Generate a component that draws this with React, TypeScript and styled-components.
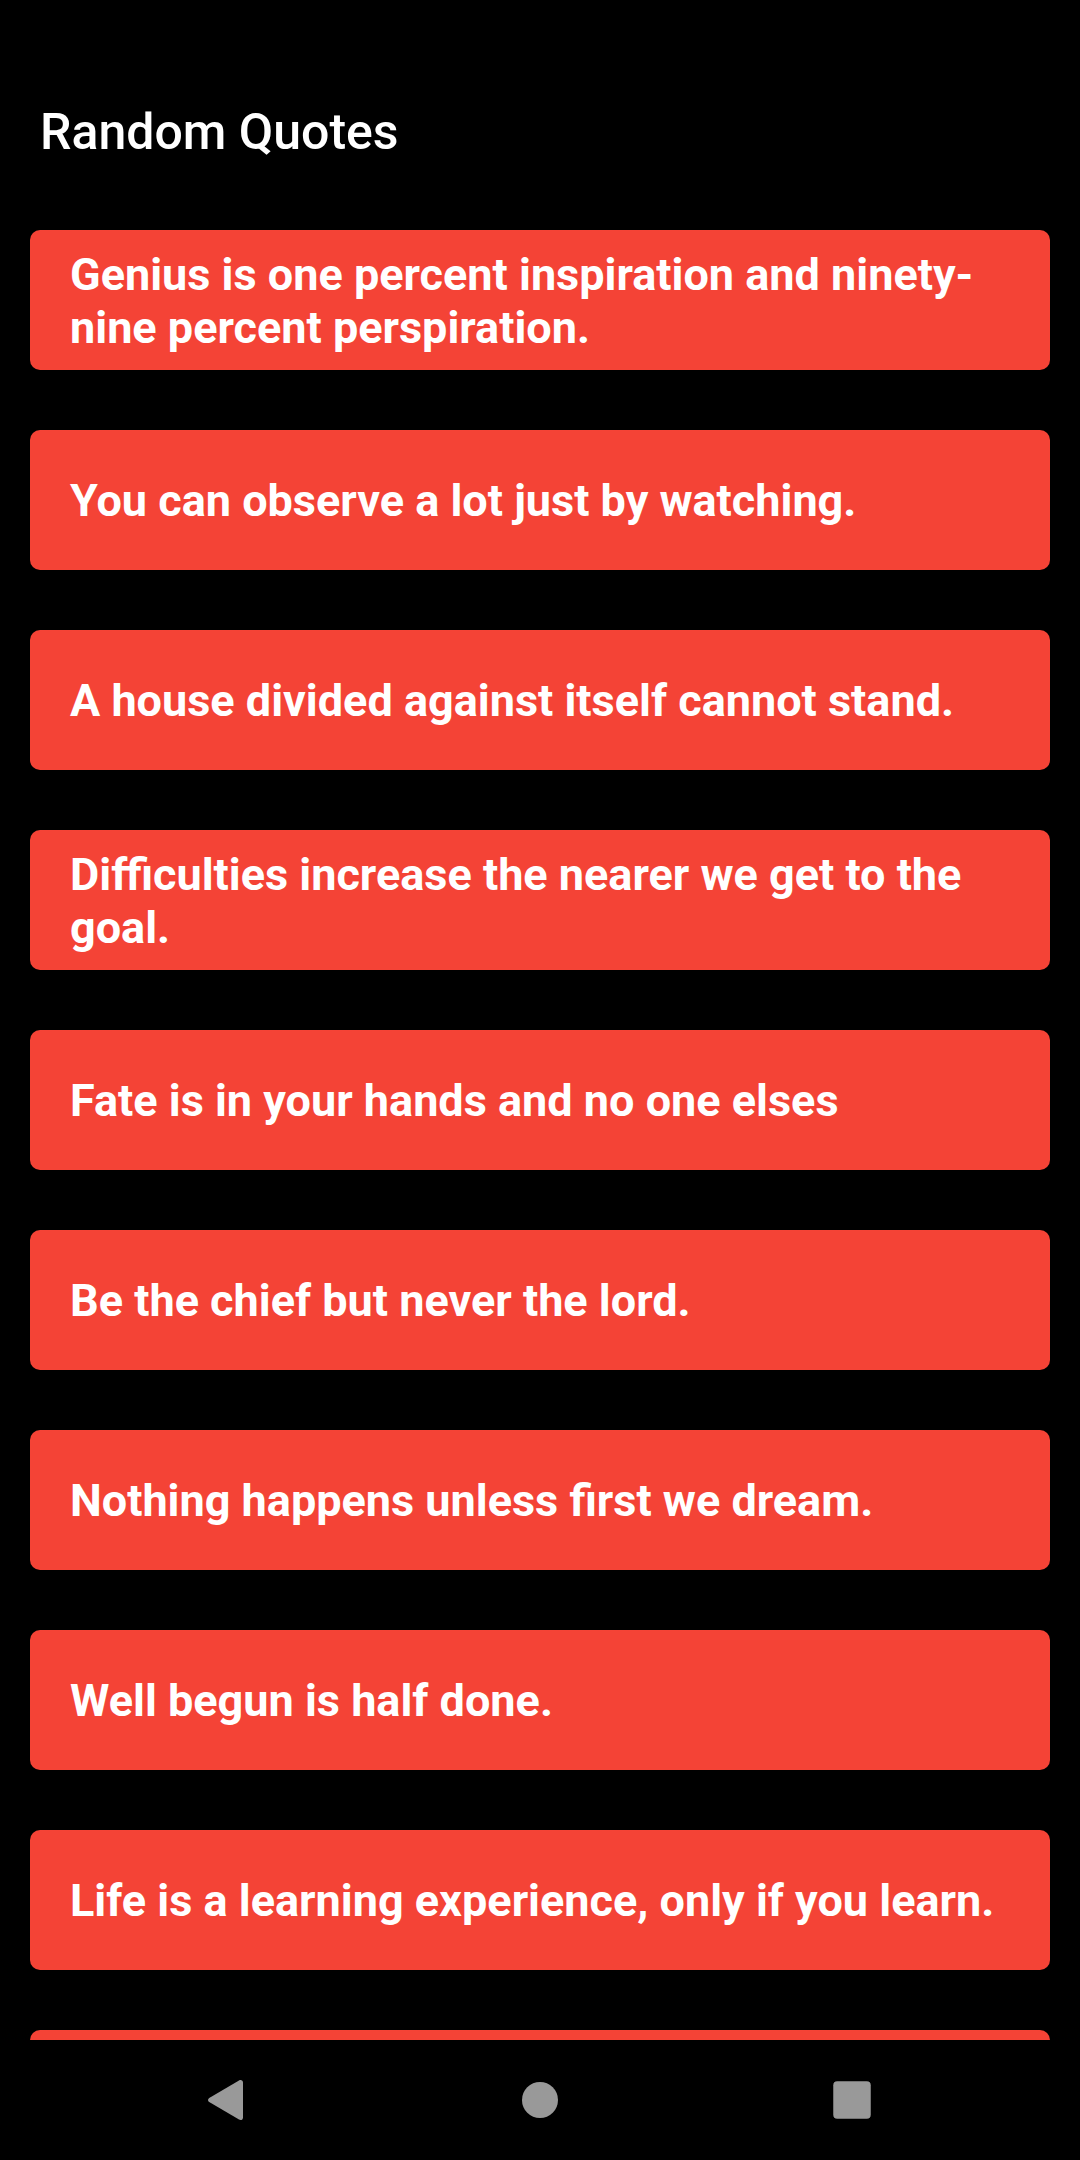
import React from 'react';
import styled, { createGlobalStyle } from 'styled-components';

const GlobalStyle = createGlobalStyle`
  * { box-sizing: border-box; }
  body { margin: 0; background: #000; }
`;

const Screen = styled.div`
  display: flex;
  flex-direction: column;
  height: 100vh;
  background: #000;
  color: #fff;
  font-family: Roboto, sans-serif;
`;

const AppBar = styled.header`
  flex: none;
  display: flex;
  align-items: flex-end;
  height: 200px;
  padding: 0 40px 38px;
`;

const Title = styled.h1`
  margin: 0;
  font-size: 50px;
  line-height: 60px;
  font-weight: 500;
`;

const QuoteList = styled.ul`
  flex: 1;
  min-height: 0;
  overflow: hidden;
  display: flex;
  flex-direction: column;
  gap: 60px;
  margin: 0;
  padding: 30px 30px 0;
  list-style: none;
`;

const QuoteCard = styled.li`
  flex: none;
  display: flex;
  align-items: center;
  min-height: 140px;
  padding: 1px 40px 0;
  border-radius: 10px;
  background: #f44336;
  font-size: 45px;
  line-height: 53px;
  font-weight: 700;
`;

const NavBar = styled.nav`
  flex: none;
  display: flex;
  justify-content: space-between;
  align-items: center;
  height: 120px;
  padding: 0 192px;
`;

const NavButton = styled.button`
  display: flex;
  align-items: center;
  justify-content: center;
  width: 72px;
  height: 72px;
  padding: 0;
  border: 0;
  background: none;
  color: #999;
`;

const quotes = [
  'Genius is one percent inspiration and ninety-nine percent perspiration.',
  'You can observe a lot just by watching.',
  'A house divided against itself cannot stand.',
  'Difficulties increase the nearer we get to the goal.',
  'Fate is in your hands and no one elses',
  'Be the chief but never the lord.',
  'Nothing happens unless first we dream.',
  'Well begun is half done.',
  'Life is a learning experience, only if you learn.',
  '',
];

export default function App() {
  return (
    <Screen>
      <GlobalStyle />
      <AppBar>
        <Title>Random Quotes</Title>
      </AppBar>
      <QuoteList>
        {quotes.map((quote, i) => (
          <QuoteCard key={i}>{quote}</QuoteCard>
        ))}
      </QuoteList>
      <NavBar>
        <NavButton aria-label="Back">
          <svg width="72" height="72" viewBox="0 0 72 72" fill="currentColor">
            <path d="M17.200 33.900 47 16.400C49 15.300 51 16.400 51 18.600V53.400C51 55.600 49 56.700 47 55.600L17.200 38.100C15.600 37.100 15.600 34.900 17.200 33.900Z" />
          </svg>
        </NavButton>
        <NavButton aria-label="Home">
          <svg width="72" height="72" viewBox="0 0 72 72" fill="currentColor">
            <circle cx="36" cy="36" r="18" />
          </svg>
        </NavButton>
        <NavButton aria-label="Overview">
          <svg width="72" height="72" viewBox="0 0 72 72" fill="currentColor">
            <rect x="17.25" y="17.25" width="37.5" height="37.5" rx="4" />
          </svg>
        </NavButton>
      </NavBar>
    </Screen>
  );
}
